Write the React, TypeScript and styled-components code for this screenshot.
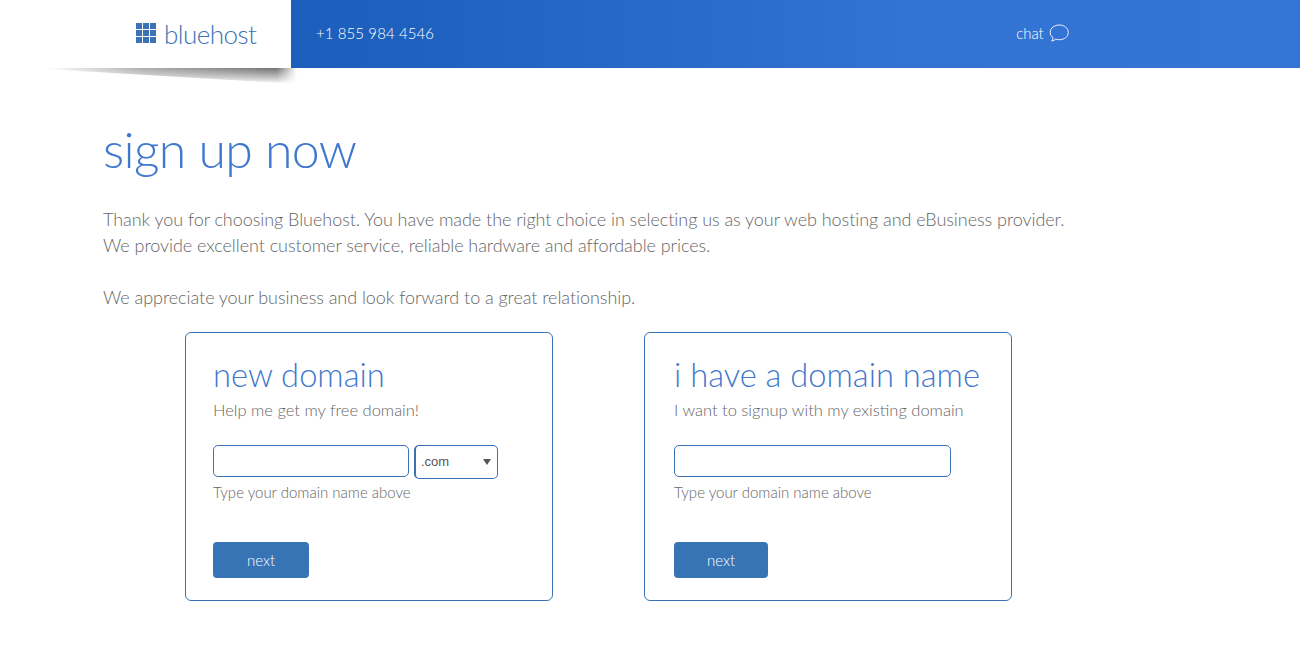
import styled, { createGlobalStyle } from "styled-components";

const GlobalStyle = createGlobalStyle`
  html, body {
    margin: 0;
    padding: 0;
    background: #fff;
    font-family: "Lato", "Liberation Sans", sans-serif;
    font-weight: 300;
  }
`;

const Header = styled.header`
  display: flex;
  height: 68px;
  background: linear-gradient(90deg, #1a5bb9 0%, #1d60bd 30%, #3273d3 70%, #3474d4 100%);
`;

const LogoPanel = styled.div`
  position: relative;
  flex: 0 0 291px;
  box-sizing: border-box;
  padding: 20px 0 0 136px;
  background: #fff;

  &::after {
    content: "";
    position: absolute;
    left: 45px;
    top: 68px;
    width: 252px;
    height: 16px;
    background: linear-gradient(180deg, rgba(90, 90, 90, 0.85) 0%, rgba(120, 120, 120, 0.55) 50%, rgba(160, 160, 160, 0) 100%);
    clip-path: polygon(0 0, 100% 0, 100% 100%, 0 6%);
    mask-image: linear-gradient(90deg, transparent 0%, rgba(0, 0, 0, 0.6) 40%, #000 92%, transparent 100%);
  }
`;

const Logo = styled.div`
  display: flex;
  align-items: center;
  gap: 8px;
  color: #3a72b5;
  font-size: 26px;
  line-height: 28px;
  letter-spacing: -0.55px;
`;

const LogoGrid = styled.svg`
  flex: none;
  width: 20px;
  height: 21px;
  margin-top: -2px;
`;

const Phone = styled.div`
  margin: 22px 0 0 25px;
  color: #fff;
  font-size: 15px;
  line-height: 22px;
  letter-spacing: 0.1px;
`;

const Chat = styled.div`
  display: flex;
  align-items: center;
  gap: 5px;
  height: 22px;
  margin: 22px 0 0 582px;
  color: #fff;
  font-size: 15px;
`;

const Main = styled.main`
  padding: 51px 0 0 103px;
`;

const Title = styled.h1`
  margin: 0 0 27px;
  color: #3f78cc;
  font-size: 50px;
  font-weight: 300;
  line-height: 60px;
  letter-spacing: -0.7px;
`;

const Intro = styled.p`
  margin: 0 0 26px;
  color: #666;
  font-size: 18px;
  line-height: 26px;
  letter-spacing: -0.05px;
  white-space: nowrap;
`;

const Cards = styled.div`
  display: flex;
  gap: 91px;
  margin: -4px 0 0 82px;
`;

const Card = styled.section<{ $inset: number }>`
  box-sizing: border-box;
  width: 368px;
  height: 269px;
  padding: 22px 0 0 ${(p) => p.$inset}px;
  border: 1px solid #3a72b5;
  border-radius: 6px;
`;

const CardTitle = styled.h2`
  margin: 0;
  color: #3f78cc;
  font-size: 32.7px;
  font-weight: 300;
  line-height: 40px;
  white-space: nowrap;
`;

const CardText = styled.p`
  margin: 4px 0 24px;
  color: #666;
  font-size: 16.5px;
  line-height: 22px;
  white-space: nowrap;
`;

const Row = styled.div`
  display: flex;
  align-items: flex-start;
  gap: 5px;
  height: 34px;
`;

const TextInput = styled.input<{ $width: number }>`
  box-sizing: border-box;
  width: ${(p) => p.$width}px;
  height: 32px;
  border: 1px solid #3a72b5;
  border-radius: 5px;
  background: #fff;
`;

const SelectBox = styled.div`
  display: flex;
  align-items: center;
  justify-content: space-between;
  box-sizing: border-box;
  width: 84px;
  height: 34px;
  padding: 0 6px 1px 5px;
  border: 1px solid #3a72b5;
  border-left-width: 2px;
  border-radius: 5px;
  color: #555;
  font-family: "Liberation Sans", sans-serif;
  font-size: 13px;
  font-weight: 400;
`;

const Caret = styled.span`
  width: 0;
  height: 0;
  border-left: 4px solid transparent;
  border-right: 4px solid transparent;
  border-top: 6px solid #555;
`;

const Hint = styled.div`
  margin: 2px 0 39px;
  color: #666;
  font-size: 15px;
  line-height: 22px;
  white-space: nowrap;
`;

const NextButton = styled.button<{ $width: number }>`
  display: block;
  width: ${(p) => p.$width}px;
  height: 36px;
  padding: 0;
  border: 0;
  border-radius: 4px;
  background: #3674b6;
  color: #fff;
  font-family: "Lato", sans-serif;
  font-size: 15px;
  font-weight: 300;
`;

const App = () => (
  <>
    <GlobalStyle />
    <Header>
      <LogoPanel>
        <Logo>
          <LogoGrid viewBox="0 0 20 21" aria-hidden="true">
            {[0, 7, 14].flatMap((y) =>
              [0, 7, 14].map((x) => (
                <rect key={`${x}-${y}`} x={x} y={y} width="6" height="6" fill="#3a72b5" />
              ))
            )}
          </LogoGrid>
          bluehost
        </Logo>
      </LogoPanel>
      <Phone>+1 855 984 4546</Phone>
      <Chat>
        chat
        <svg width="20" height="19" viewBox="0 0 20 19" fill="none" stroke="#fff" strokeWidth="0.9" aria-hidden="true">
          <path d="M10.5 1C5.5 1 1.2 4 1.2 8.4c0 2.4 1 4 2.8 5.2 0 1.2-.5 2.5-1.3 3.4 1.7-.2 3-1 4-1.8 1.2.4 2.5.5 3.8.5 4.8 0 8.7-3 8.7-7.3S15.3 1 10.5 1z" />
        </svg>
      </Chat>
    </Header>
    <Main>
      <Title>sign up now</Title>
      <Intro>
        Thank you for choosing Bluehost. You have made the right choice in selecting us as your web hosting and eBusiness provider.
        <br />
        We provide excellent customer service, reliable hardware and affordable prices.
      </Intro>
      <Intro>We appreciate your business and look forward to a great relationship.</Intro>
      <Cards>
        <Card $inset={27}>
          <CardTitle>new domain</CardTitle>
          <CardText>Help me get my free domain!</CardText>
          <Row>
            <TextInput $width={196} />
            <SelectBox>
              .com
              <Caret />
            </SelectBox>
          </Row>
          <Hint>Type your domain name above</Hint>
          <NextButton $width={96}>next</NextButton>
        </Card>
        <Card $inset={29}>
          <CardTitle>i have a domain name</CardTitle>
          <CardText>I want to signup with my existing domain</CardText>
          <Row>
            <TextInput $width={277} />
          </Row>
          <Hint>Type your domain name above</Hint>
          <NextButton $width={94}>next</NextButton>
        </Card>
      </Cards>
    </Main>
  </>
);

export default App;
